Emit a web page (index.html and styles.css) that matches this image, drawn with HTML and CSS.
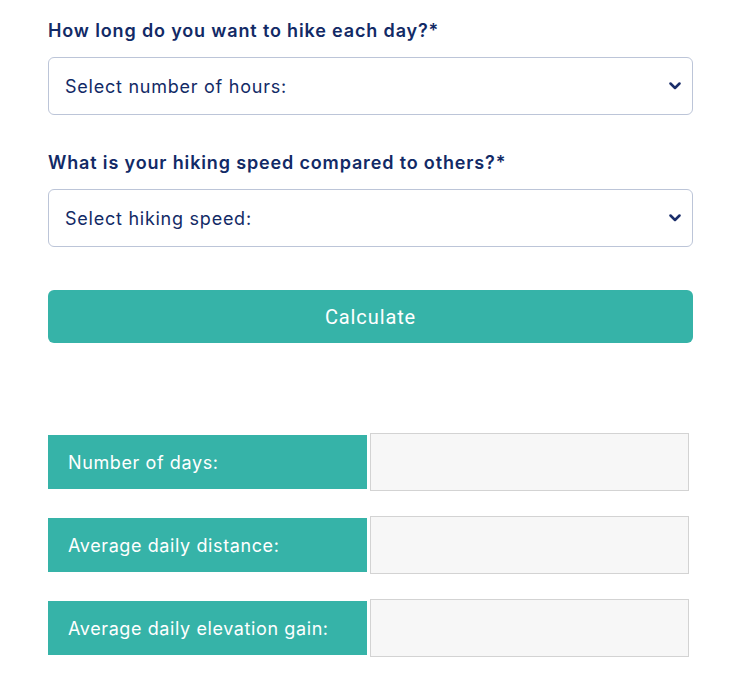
FILE: index.html
```html
<!DOCTYPE html>
<html>
<head>
<meta charset="utf-8">
<link rel="stylesheet" href="styles.css">
</head>
<body>
<main class="calc">
  <div class="field">
    <label class="q">How long do you want to hike each day?*</label>
    <div class="select"><span>Select number of hours:</span>
      <svg class="chev" width="12" height="8" viewBox="0 0 12 8"><path d="M1.5 1.5 L6 6 L10.5 1.5" fill="none" stroke="#1b2f6b" stroke-width="2.5" stroke-linecap="round" stroke-linejoin="round"/></svg>
    </div>
  </div>
  <div class="field">
    <label class="q">What is your hiking speed compared to others?*</label>
    <div class="select"><span>Select hiking speed:</span>
      <svg class="chev" width="12" height="8" viewBox="0 0 12 8"><path d="M1.5 1.5 L6 6 L10.5 1.5" fill="none" stroke="#1b2f6b" stroke-width="2.5" stroke-linecap="round" stroke-linejoin="round"/></svg>
    </div>
  </div>
  <button class="btn">Calculate</button>
  <div class="results">
    <div class="row"><div class="rlabel">Number of days:</div><div class="rbox"></div></div>
    <div class="row"><div class="rlabel">Average daily distance:</div><div class="rbox"></div></div>
    <div class="row"><div class="rlabel">Average daily elevation gain:</div><div class="rbox"></div></div>
  </div>
</main>
</body>
</html>
```
FILE: styles.css
```css
html, body { margin: 0; padding: 0; background: #fff; }
body { font-family: "Inter", "Open Sans", sans-serif; color: #122a66; }
.calc { width: 645px; margin-left: 48px; padding-top: 19px; display: flex; flex-direction: column; }
.field { display: flex; flex-direction: column; margin-bottom: 36px; }
.q { font-size: 18px; font-weight: 600; line-height: 24px; letter-spacing: 0.85px; color: #122a66; margin-bottom: 14px; }
.select { height: 56px; border: 1px solid #bcc5d8; border-radius: 6px; display: flex; align-items: center; justify-content: space-between; padding: 0 11px 0 16px; font-size: 18px; letter-spacing: 0.75px; color: #122a66; }
.btn { margin-top: 7px; height: 53px; border: none; border-radius: 6px; background: #36b3a8; color: #fff; font-family: "Roboto", sans-serif; font-size: 20px; letter-spacing: 0.9px; }
.results { margin-top: 90px; display: flex; flex-direction: column; gap: 25px; }
.row { display: flex; align-items: center; gap: 3px; }
.rlabel { width: 299px; height: 54px; background: #36b3a8; color: #fff; display: flex; align-items: center; padding-left: 20px; font-size: 18px; letter-spacing: 0.6px; }
.rbox { width: 317px; height: 56px; background: #f7f7f7; border: 1px solid #d3d3d3; }
```
